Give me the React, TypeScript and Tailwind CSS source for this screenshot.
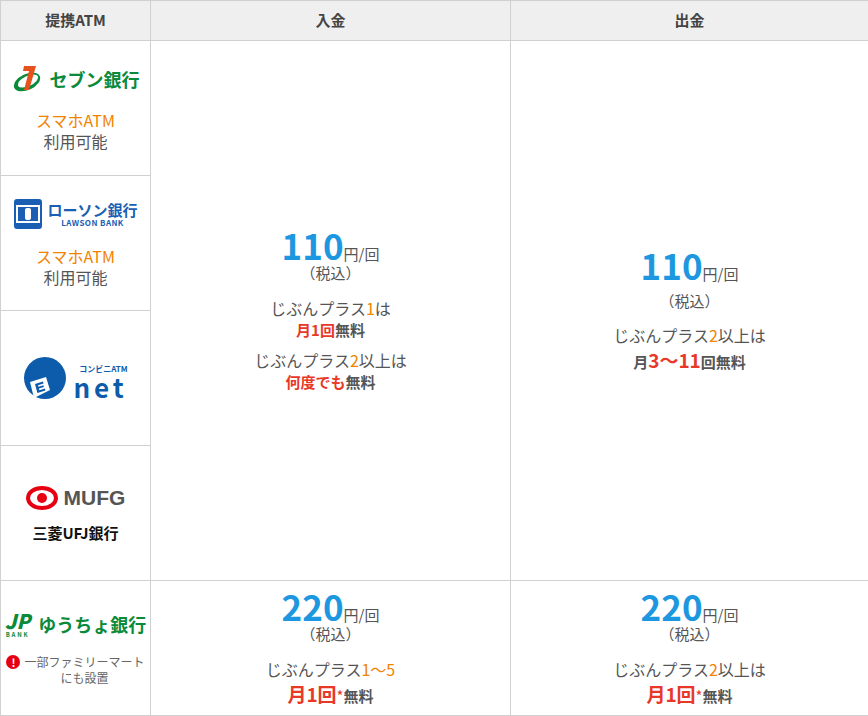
const font = { fontFamily: '"Noto Sans CJK JP", "Noto Sans", sans-serif' };

function Price({ v }: { v: string }) {
  return (
    <div className="leading-none">
      <span className="text-[35px] font-bold text-[#1d98e0]">{v}</span>
      <span className="text-[15px] text-[#555]">円/回</span>
    </div>
  );
}

function Seven() {
  return (
    <div className="flex items-center justify-center gap-1">
      <svg width="34" height="30" viewBox="0 0 34 30">
        <ellipse cx="15" cy="18" rx="14" ry="8" fill="#0a8a3a" transform="rotate(-25 15 18)" />
        <ellipse cx="16" cy="17" rx="11" ry="5" fill="#fff" transform="rotate(-25 16 17)" />
        <path d="M12 2h12l-7 24h-5l5-19h-6z" fill="#e8501c" />
      </svg>
      <span className="text-[18px] font-bold text-[#0a8a3a]">セブン銀行</span>
    </div>
  );
}

function Lawson() {
  return (
    <div className="flex items-center justify-center gap-1">
      <svg width="30" height="32" viewBox="0 0 30 32">
        <rect x="1" y="1" width="28" height="30" rx="3" fill="#1a5fb4" />
        <rect x="3" y="7" width="24" height="18" fill="#fff" />
        <rect x="5" y="9" width="20" height="14" fill="#1a5fb4" />
        <rect x="12" y="10" width="6" height="12" rx="2" fill="#fff" />
      </svg>
      <div className="flex flex-col items-center leading-[16px] text-[#1a5fb4]">
        <span className="text-[15px] font-bold">ローソン銀行</span>
        <span className="text-[8px] font-bold leading-[9px] tracking-wider">LAWSON BANK</span>
      </div>
    </div>
  );
}

function Enet() {
  return (
    <div className="flex items-end justify-center gap-1">
      <svg width="46" height="44" viewBox="0 0 46 44">
        <circle cx="22" cy="22" r="21" fill="#0d5cab" />
        <path d="M7 26l16-5 4 13-16 8z" fill="#fff" />
        <path d="M12 28l8-2.5 0.5 2-5.5 1.7 0.4 1.6 5-1.5 0.5 1.8-5 1.5 0.5 1.6 5.5-1.7 0.5 2-8 2.5z" fill="#0d5cab" />
      </svg>
      <div className="flex flex-col items-end text-[#0d5cab]">
        <span className="text-[8px] font-bold leading-[10px]">コンビニATM</span>
        <span className="text-[26px] font-bold leading-[26px] tracking-[0.15em]">net</span>
      </div>
    </div>
  );
}

function Mufg() {
  return (
    <div className="flex flex-col items-center gap-2">
      <div className="flex items-center gap-1.5">
        <svg width="32" height="24" viewBox="0 0 32 24">
          <ellipse cx="16" cy="12" rx="14" ry="10" fill="none" stroke="#e60012" strokeWidth="4" />
          <circle cx="16" cy="12" r="5" fill="#e60012" />
        </svg>
        <span className="text-[21px] font-bold text-[#555]" style={{ fontFamily: '"Liberation Sans", sans-serif' }}>MUFG</span>
      </div>
      <span className="text-[15px] font-bold text-[#111]">三菱UFJ銀行</span>
    </div>
  );
}

function JP() {
  return (
    <div className="flex items-center justify-center gap-2">
      <div className="flex flex-col items-center text-[#0a8a3a]">
        <span className="text-[20px] font-black italic leading-[20px]">JP</span>
        <span className="text-[6px] font-bold leading-[7px] tracking-[0.3em]">BANK</span>
      </div>
      <span className="text-[18px] font-bold text-[#0a8a3a]">ゆうちょ銀行</span>
    </div>
  );
}

function Avail() {
  return (
    <div className="mt-4 text-[16px] leading-[21px]">
      <div className="text-[#f08300]">スマホATM</div>
      <div className="text-[#555]">利用可能</div>
    </div>
  );
}

export default function App() {
  const cell = "border border-[#d0d0d0]";
  return (
    <div className="w-[868px] bg-white" style={font}>
      <table className="w-[868px] table-fixed border-collapse text-center text-[#555]">
        <colgroup>
          <col className="w-[150px]" />
          <col className="w-[360px]" />
          <col className="w-[358px]" />
        </colgroup>
        <thead>
          <tr className="h-[40px] bg-[#efefef] text-[15px] font-bold text-[#444]">
            <th className={cell}>提携ATM</th>
            <th className={cell}>入金</th>
            <th className={cell}>出金</th>
          </tr>
        </thead>
        <tbody>
          <tr className="h-[135px]">
            <td className={cell}><Seven /><Avail /></td>
            <td className={cell} rowSpan={4}>
              <div className="flex flex-col items-center">
                <Price v="110" />
                <div className="text-[15px]">（税込）</div>
                <div className="mt-3 text-[16px] leading-[22px]">じぶんプラス<span className="text-[#f08300]">1</span>は</div>
                <div className="text-[15px] font-bold"><span className="text-[#e83828]">月1回</span>無料</div>
                <div className="mt-2 text-[16px] leading-[22px]">じぶんプラス<span className="text-[#f08300]">2</span>以上は</div>
                <div className="text-[15px] font-bold"><span className="text-[#e83828]">何度でも</span>無料</div>
              </div>
            </td>
            <td className={cell} rowSpan={4}>
              <div className="flex flex-col items-center">
                <Price v="110" />
                <div className="mt-2 text-[15px]">（税込）</div>
                <div className="mt-3 text-[16px] leading-[22px]">じぶんプラス<span className="text-[#f08300]">2</span>以上は</div>
                <div className="text-[15px] font-bold">月<span className="text-[19px] text-[#e83828]">3〜11</span>回無料</div>
              </div>
            </td>
          </tr>
          <tr className="h-[135px]"><td className={cell}><Lawson /><Avail /></td></tr>
          <tr className="h-[135px]"><td className={cell}><Enet /></td></tr>
          <tr className="h-[135px]"><td className={cell}><Mufg /></td></tr>
          <tr className="h-[135px]">
            <td className={cell}>
              <JP />
              <div className="mt-4 flex justify-center gap-1 text-[12px] leading-[16px] text-[#666]">
                <span className="mt-[1px] flex h-[14px] w-[14px] shrink-0 items-center justify-center rounded-full bg-[#e60012] text-[11px] font-bold text-white">!</span>
                <span>一部ファミリーマート<br />にも設置</span>
              </div>
            </td>
            <td className={cell}>
              <div className="flex flex-col items-center">
                <Price v="220" />
                <div className="text-[15px]">（税込）</div>
                <div className="mt-3 text-[16px] leading-[22px]">じぶんプラス<span className="text-[#f08300]">1〜5</span></div>
                <div className="text-[15px] font-bold"><span className="text-[19px] text-[#e83828]">月1回</span><span className="font-normal text-[#e83828]">*</span>無料</div>
              </div>
            </td>
            <td className={cell}>
              <div className="flex flex-col items-center">
                <Price v="220" />
                <div className="text-[15px]">（税込）</div>
                <div className="mt-3 text-[16px] leading-[22px]">じぶんプラス<span className="text-[#f08300]">2</span>以上は</div>
                <div className="text-[15px] font-bold"><span className="text-[19px] text-[#e83828]">月1回</span><span className="font-normal text-[#e83828]">*</span>無料</div>
              </div>
            </td>
          </tr>
        </tbody>
      </table>
    </div>
  );
}
